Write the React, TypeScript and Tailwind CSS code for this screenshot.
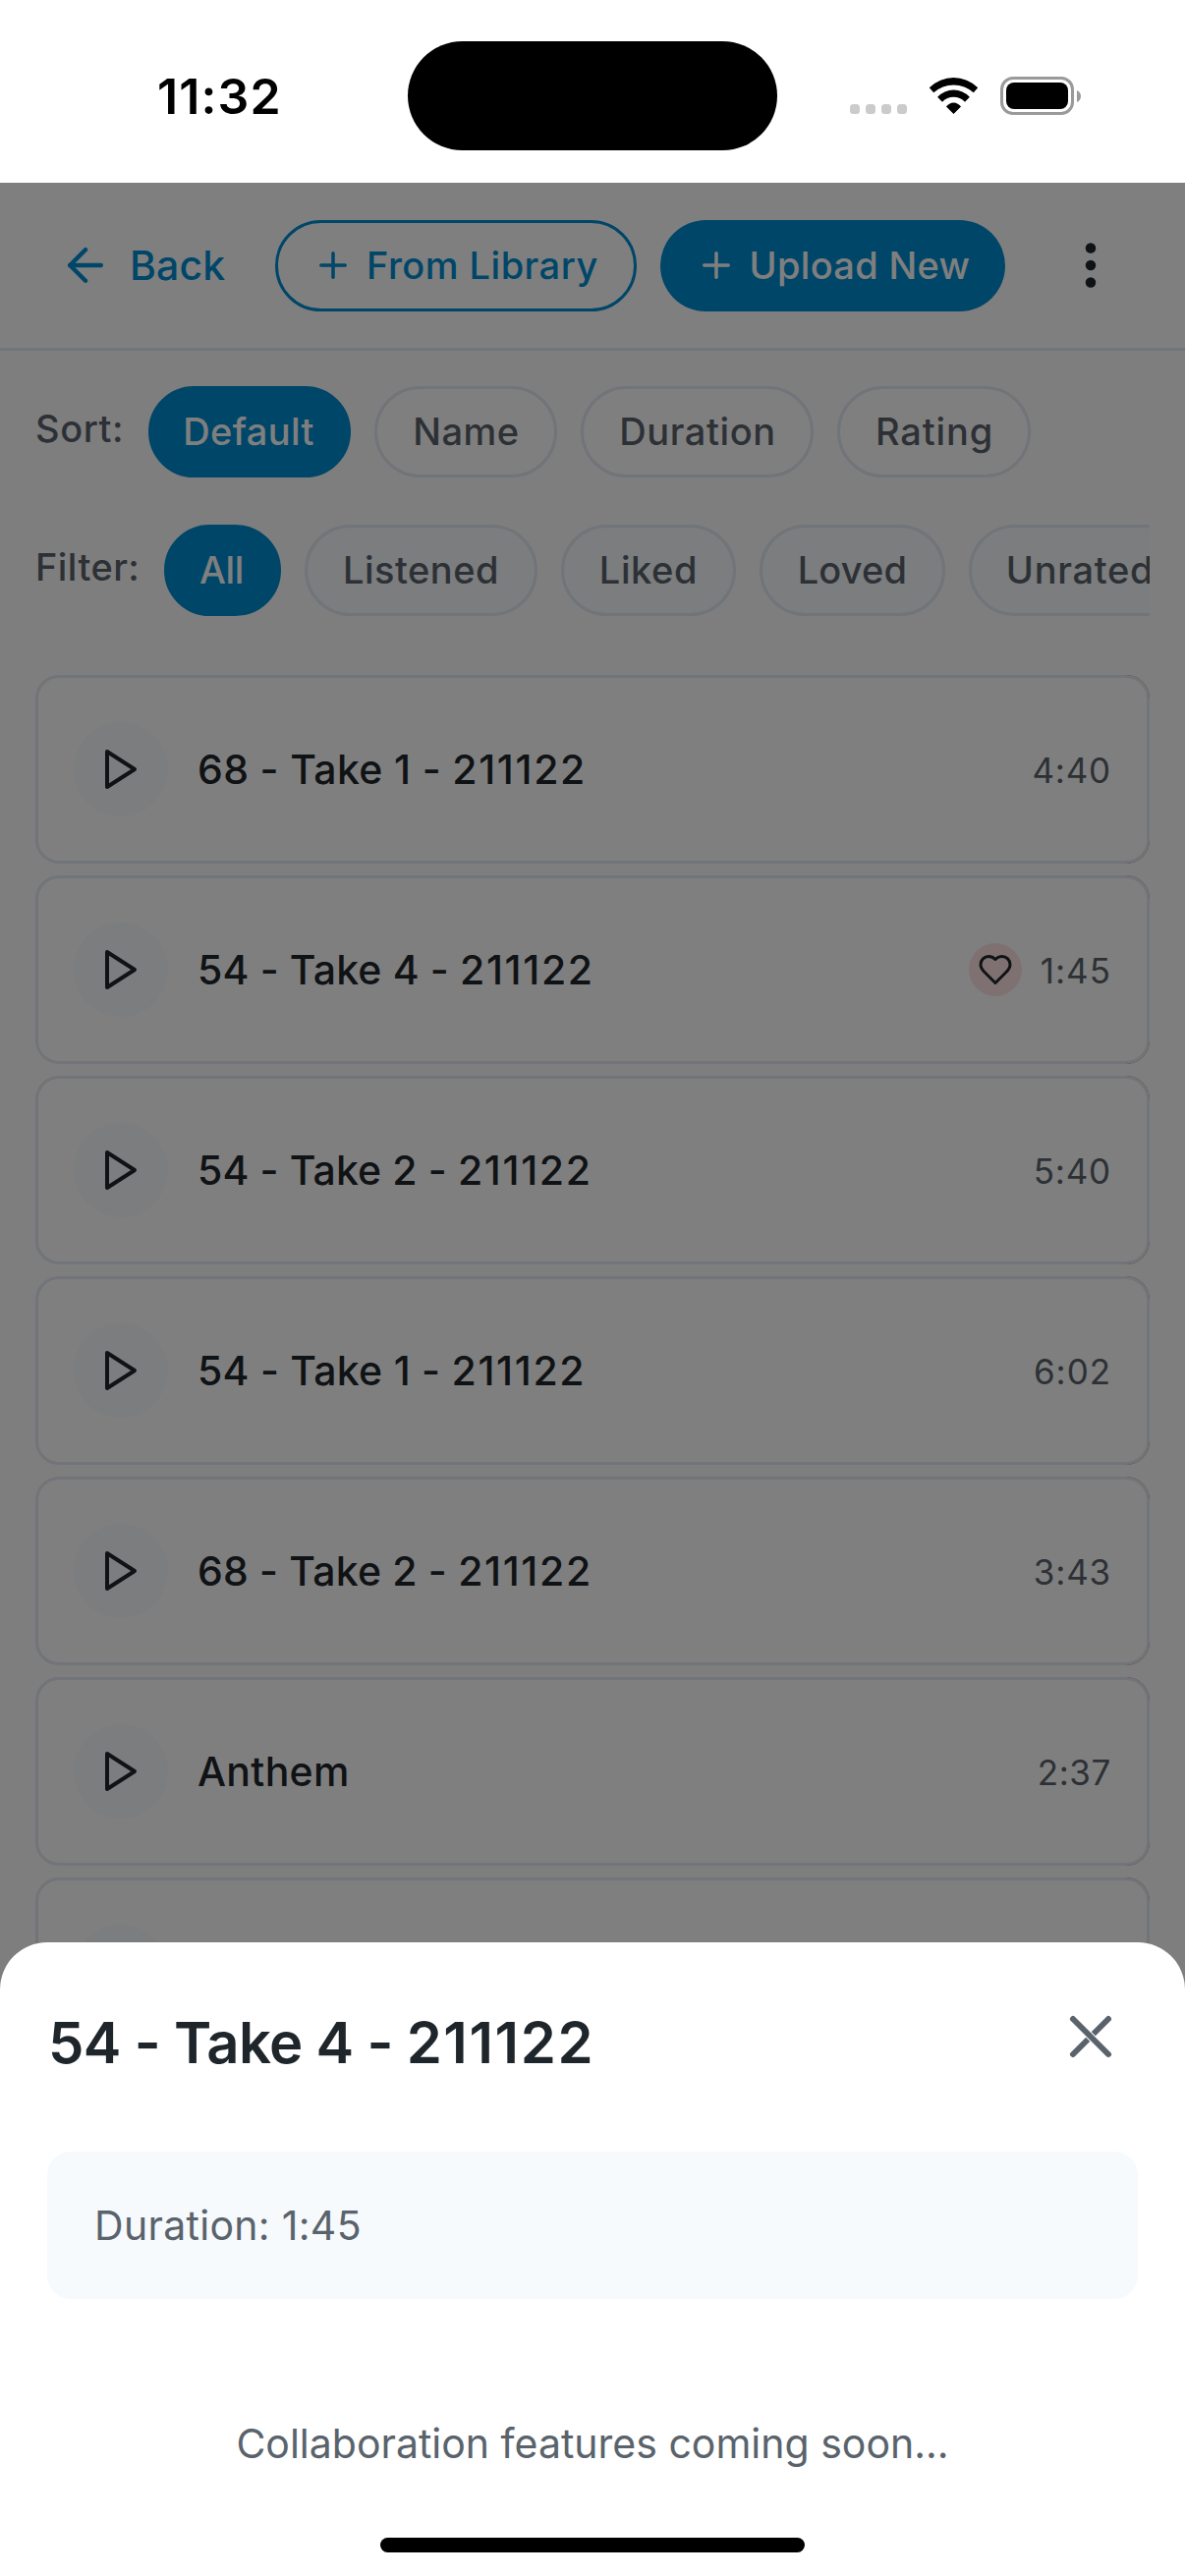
import { ArrowLeft, Plus } from "lucide-react";

type Chip = { label: string; box: string; active?: boolean };
type Track = { name: string; code?: string; time: string; tracking: string; timeTracking: string; loved?: boolean };

const sortChips: Chip[] = [
  { label: "Default", box: "w-[206px] tracking-[0.39px]", active: true },
  { label: "Name", box: "w-[186px] tracking-[0.48px]" },
  { label: "Duration", box: "w-[237px] tracking-[0.6px]" },
  { label: "Rating", box: "w-[197px] tracking-[0.88px]" },
];

const filterChips: Chip[] = [
  { label: "All", box: "w-[119px] tracking-[-0.3px]", active: true },
  { label: "Listened", box: "w-[237px] tracking-[0.5px]" },
  { label: "Liked", box: "w-[178px] tracking-[0.61px]" },
  { label: "Loved", box: "w-[189px] tracking-[0.2px]" },
  { label: "Unrated", box: "w-[226px] tracking-[0.7px]" },
];

const tracks: Track[] = [
  { name: "68 - Take 1 - ", code: "211122", time: "4:40", tracking: "tracking-[0.35px]", timeTracking: "tracking-[0.8px]" },
  { name: "54 - Take 4 - ", code: "211122", time: "1:45", tracking: "tracking-[0.15px]", timeTracking: "tracking-[1px]", loved: true },
  { name: "54 - Take 2 - ", code: "211122", time: "5:40", tracking: "tracking-[0.12px]", timeTracking: "tracking-[0.8px]" },
  { name: "54 - Take 1 - ", code: "211122", time: "6:02", tracking: "tracking-[0.25px]", timeTracking: "tracking-[0.97px]" },
  { name: "68 - Take 2 - ", code: "211122", time: "3:43", tracking: "tracking-[0.18px]", timeTracking: "tracking-[0.8px]" },
  { name: "Anthem", time: "2:37", tracking: "tracking-[0.3px]", timeTracking: "tracking-[0.6px]" },
  { name: "", time: "", tracking: "tracking-normal", timeTracking: "tracking-normal" },
];

function StatusBar() {
  return (
    <div className="flex h-[186px] items-center bg-white pt-[9px] pl-[160px] text-black">
      <div className="w-[255px] text-[50px] leading-[60px] font-semibold tracking-[1.12px]">11:32</div>
      <div className="mb-px h-[111px] w-[376px] rounded-full bg-black" />
      <div className="ml-[74px] flex h-[39px] items-end gap-[6px] pb-px">
        {[0, 1, 2, 3].map((i) => (
          <div key={i} className="size-[10px] rounded-[3.5px] bg-[#cbcbcb]" />
        ))}
      </div>
      <svg className="ml-[22px] h-[39px] w-[51px]" viewBox="0 0 51 39" fill="currentColor">
        <path d="M0.8 11.3A35 35 0 0 1 50.2 11.3L45.8 16.3A30 30 0 0 0 5.2 16.3Z" />
        <path d="M9.1 20.7A22.4 22.4 0 0 1 41.9 20.7L37 25.7A16 16 0 0 0 14 25.7Z" />
        <path d="M18 30.6A9 9 0 0 1 33 30.6L25.5 38Z" />
      </svg>
      <div className="ml-[22px] h-[39px] w-[75px] rounded-[13px] border-[3px] border-[#9a9a9a] p-[3px]">
        <div className="size-full rounded-[8px] bg-black" />
      </div>
      <svg className="ml-[3px] h-[12px] w-[4px]" viewBox="0 0 4 12" fill="#9a9a9a">
        <path d="M0 0C2.4 1 4 3.2 4 6S2.4 11 0 12Z" />
      </svg>
    </div>
  );
}

function Header() {
  return (
    <div className="flex h-[171px] items-center border-b-[3px] border-[#e2e8f0] bg-white pt-px pl-[60px] text-[#008cd0]">
      <div className="mb-px flex h-[54px] w-[220px] items-center">
        <ArrowLeft className="size-[54px]" strokeWidth={2} />
        <span className="ml-[18px] text-[41px] leading-[54px] font-medium tracking-[0.14px]">Back</span>
      </div>
      <div className="flex h-[93px] w-[368px] items-center gap-[13px] rounded-full border-[3px] border-[#008cd0] pl-[35px] text-[38px] leading-[51px] font-medium tracking-[0.48px] whitespace-nowrap">
        <Plus className="mb-px size-[42px] shrink-0" strokeWidth={2} />
        From Library
      </div>
      <div className="ml-6 flex h-[93px] w-[351px] items-center gap-[12.5px] rounded-full bg-[#008cd0] pl-9 text-[38px] leading-[51px] font-medium tracking-[0.32px] whitespace-nowrap text-white">
        <Plus className="mb-px size-[42px] shrink-0" strokeWidth={2} />
        Upload New
      </div>
      <svg className="mb-px ml-[57px] size-[60px] text-[#1f262b]" viewBox="0 0 24 24" fill="currentColor">
        <circle cx="12" cy="5" r="2.1" />
        <circle cx="12" cy="12" r="2.1" />
        <circle cx="12" cy="19" r="2.1" />
      </svg>
    </div>
  );
}

function Pill({ chip, idle }: { chip: Chip; idle: string }) {
  const look = chip.active
    ? "border-[#008cd0] bg-[#008cd0] pr-[2px] text-white"
    : `border-[#e2e8f0] text-[#5a636c] ${idle}`;
  return (
    <div
      className={`flex h-[93px] shrink-0 items-center justify-center rounded-full border-[3px] text-[38px] leading-[51px] font-medium ${chip.box} ${look}`}
    >
      {chip.label}
    </div>
  );
}

function TrackCard({ track }: { track: Track }) {
  return (
    <div className="rounded-[24px] bg-linear-to-r from-transparent from-95% to-red-500 to-95%">
      <div className="flex h-[192px] items-center rounded-[24px] border-[3px] border-[#e2e8f0] bg-white px-9">
        <div className="flex size-24 items-center justify-center rounded-full bg-[#f6fafd]">
          {track.name && (
            <svg className="size-12 text-[#1f262b]" viewBox="0 0 24 24" fill="none" stroke="currentColor" strokeWidth="2" strokeLinejoin="round">
              <polygon points="5 3 19 12 5 21" />
            </svg>
          )}
        </div>
        <div className={`ml-[30px] flex-1 text-[41px] leading-[56px] font-medium text-[#1f262b] ${track.tracking}`}>
          {track.name}
          {track.code && <span className="tracking-[1.65px]">{track.code}</span>}
        </div>
        {track.loved && (
          <div className="mr-[19px] flex size-[54px] items-center justify-center rounded-full bg-[#ffe2e2] pl-px">
            <svg className="size-9 text-[#1f262b]" viewBox="0 0 24 24" fill="none" stroke="currentColor" strokeWidth="2" strokeLinecap="round" strokeLinejoin="round">
              <path d="M19 14c1.49-1.46 3-3.21 3-5.5A5.5 5.5 0 0 0 16.5 3c-1.76 0-3 .5-4.5 2-1.5-1.5-2.74-2-4.5-2A5.5 5.5 0 0 0 2 8.5c0 2.3 1.5 4.05 3 5.5l7 7Z" />
            </svg>
          </div>
        )}
        <div className={`pt-[2px] text-[35px] leading-[48px] text-[#5a636c] ${track.timeTracking}`}>{track.time}</div>
      </div>
    </div>
  );
}

function DetailSheet() {
  return (
    <div className="absolute inset-x-0 bottom-0 h-[645px] rounded-t-[48px] bg-white px-12 pt-[60px]">
      <div className="flex items-start justify-between pr-3">
        <h2 className="mt-[6px] pl-px text-[58px] leading-[72px] font-semibold tracking-[-0.68px] text-[#1f262b]">
          54 - Take 4 - <span className="tracking-[1.6px]">211122</span>
        </h2>
        <svg className="size-[72px] text-[#5a636c]" viewBox="0 0 24 24" fill="none" strokeLinecap="round">
          <path d="M18 6L6 18" stroke="currentColor" strokeWidth="2" />
          <path d="M6 6L18 18" stroke="white" strokeWidth="2.7" />
          <path d="M6 6L18 18" stroke="currentColor" strokeWidth="2" />
        </svg>
      </div>
      <div className="mt-[75px] flex h-[150px] items-center rounded-[24px] bg-[#f6fafd] px-12 text-[41px] leading-[60px] tracking-[0.3px] text-[#5a636c]">
        Duration: 1:45
      </div>
      <p className="mt-[117px] text-center text-[41px] leading-[60px] text-[#5a636c]">
        Collaboration features coming soon...
      </p>
      <div className="absolute bottom-6 left-[387px] h-[15px] w-[432px] rounded-full bg-black" />
    </div>
  );
}

export default function App() {
  return (
    <div className="h-[2622px] w-[1206px] overflow-hidden bg-white font-['Inter',sans-serif]">
      <StatusBar />
      <div className="relative h-[2436px] overflow-hidden bg-[#fcfcfc]">
        <Header />
        <div className="px-9 pt-9">
          <div className="flex items-center">
            <span className="mb-[6px] w-[115px] text-[38px] leading-[51px] font-medium tracking-[0.58px] text-[#5a636c]">Sort:</span>
            <div className="flex gap-6">
              {sortChips.map((c) => (
                <Pill key={c.label} chip={c} idle="bg-white pl-px" />
              ))}
            </div>
          </div>
          <div className="mt-12 flex items-center">
            <span className="mb-[6px] w-[131px] shrink-0 text-[38px] leading-[51px] font-medium tracking-[0.44px] text-[#5a636c]">Filter:</span>
            <div className="flex min-w-0 flex-1 gap-6 overflow-hidden">
              {filterChips.map((c) => (
                <Pill key={c.label} chip={c} idle="bg-[#f6fafd]" />
              ))}
            </div>
          </div>
          <div className="mt-[60px] flex flex-col gap-3">
            {tracks.map((t, i) => (
              <TrackCard key={i} track={t} />
            ))}
          </div>
        </div>
        <div className="absolute inset-0 bg-black/50" />
        <DetailSheet />
      </div>
    </div>
  );
}
